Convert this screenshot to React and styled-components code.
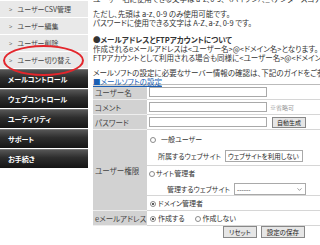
import React from "react";
import styled, { createGlobalStyle } from "styled-components";
import { ChevronDown } from "lucide-react";

const GlobalStyle = createGlobalStyle`
  html, body {
    margin: 0;
    padding: 0;
    background: #fff;
    overflow: hidden;
  }
  body {
    font-family: "Noto Sans CJK JP", "Noto Sans", sans-serif;
    font-feature-settings: "palt" 1;
    color: #333;
  }
`;

const subMenu = ["ユーザーCSV管理", "ユーザー編集", "ユーザー削除", "ユーザー切り替え"];
const mainMenu = ["メールコントロール", "ウェブコントロール", "ユーティリティ", "サポート", "お手続き"];

const App = () => {
  return (
    <>
      <GlobalStyle />
      <Page>
        <Sidebar>
          <SubList>
            {subMenu.map((label) => (
              <SubItem key={label}>
                <Chevron>&gt;</Chevron>
                {label}
              </SubItem>
            ))}
          </SubList>
          <MainList>
            {mainMenu.map((label) => (
              <MainItem key={label}>{label}</MainItem>
            ))}
          </MainList>
          <Highlight />
        </Sidebar>
        <Content>
          <Paragraph $gap={-6}>
            ユーザー名に使用できる文字は a-z、0-9、-（ハイフン）、_（アンダースコア）です。
          </Paragraph>
          <Paragraph $gap={6}>
            ただし、先頭は a-z、0-9 のみ使用可能です。
            <br />
            パスワードに使用できる文字は A-Z、a-z、0-9 です。
          </Paragraph>
          <Paragraph $gap={8}>
            <strong>●メールアドレスとFTPアカウントについて</strong>
            <br />
            作成されるeメールアドレスは&lt;ユーザー名&gt;@&lt;ドメイン名&gt;となります。
            <br />
            FTPアカウントとして利用される場合も同様に&lt;ユーザー名&gt;@&lt;ドメイン名&gt;の形式で入力してください。
          </Paragraph>
          <Paragraph $gap={6}>
            メールソフトの設定に必要なサーバー情報の確認は、下記のガイドをご参照ください。
            <br />
            <Link href="#">■メールソフトの設定</Link>
          </Paragraph>
          <FormTable>
            <tbody>
              <Row>
                <Label>ユーザー名</Label>
                <Value>
                  <TextBox />
                </Value>
              </Row>
              <Row>
                <Label>コメント</Label>
                <Value>
                  <TextBox />
                  <Note>※省略可</Note>
                </Value>
              </Row>
              <Row>
                <Label>パスワード</Label>
                <Value>
                  <TextBox />
                  <SmallButton>自動生成</SmallButton>
                </Value>
              </Row>
              <Row>
                <Label>ユーザー権限</Label>
                <Value $flush>
                  <Section $height={36}>
                    <Choice $top={5} $left={3}>
                      <Radio />
                      <ChoiceText $space={5}>一般ユーザー</ChoiceText>
                    </Choice>
                    <SelectLine $left={11} $top={6}>
                      所属するウェブサイト
                      <SelectBox $width={78}>
                        ウェブサイトを利用しない
                        <ChevronDown size={7} strokeWidth={1.5} />
                      </SelectBox>
                    </SelectLine>
                  </Section>
                  <Section $height={30}>
                    <Choice $top={3} $left={2}>
                      <Radio />
                      <ChoiceText $space={1}>サイト管理者</ChoiceText>
                    </Choice>
                    <SelectLine $left={20} $top={5}>
                      管理するウェブサイト
                      <SelectBox $width={72}>
                        ------
                        <ChevronDown size={7} strokeWidth={1.5} />
                      </SelectBox>
                    </SelectLine>
                  </Section>
                  <Section $height={14} $last>
                    <Choice $top={3} $left={3}>
                      <Radio $checked />
                      <ChoiceText $space={2}>ドメイン管理者</ChoiceText>
                    </Choice>
                  </Section>
                </Value>
              </Row>
              <Row>
                <Label>eメールアドレス</Label>
                <Value>
                  <Choice $left={1}>
                    <Radio $checked />
                    <ChoiceText $space={2}>作成する</ChoiceText>
                  </Choice>
                  <Choice $left={10}>
                    <Radio />
                    <ChoiceText $space={2}>作成しない</ChoiceText>
                  </Choice>
                </Value>
              </Row>
            </tbody>
          </FormTable>
          <Actions>
            <ActionButton>リセット</ActionButton>
            <ActionButton>設定の保存</ActionButton>
          </Actions>
        </Content>
      </Page>
    </>
  );
};

const Page = styled.div`
  display: flex;
  align-items: flex-start;
  gap: 5px;
  width: 450px;
`;

const Sidebar = styled.nav`
  position: relative;
  width: 88px;
  flex-shrink: 0;
`;

const SubList = styled.ul`
  list-style: none;
  margin: 0;
  padding: 0;
  border-top: 1px solid #fff;
  background: #e9e9e9;
`;

const SubItem = styled.li`
  display: flex;
  align-items: center;
  height: 16px;
  border-bottom: 1px solid #fff;
  padding-left: 9px;
  font-size: 7px;
  color: #444;
  white-space: nowrap;
`;

const Chevron = styled.span`
  font-size: 6px;
  color: #666;
  margin-right: 5px;
`;

const MainList = styled.ul`
  list-style: none;
  margin: 0;
  padding: 0;
  display: flex;
  flex-direction: column;
  gap: 1px;
`;

const MainItem = styled.li`
  display: flex;
  align-items: center;
  height: 19px;
  padding-left: 8px;
  background: linear-gradient(#5a5a5a 0%, #2e2e2e 45%, #151515 100%);
  box-shadow: inset 0 1px 0 #777;
  color: #fff;
  font-size: 7px;
  font-weight: bold;
  white-space: nowrap;
`;

const Highlight = styled.div`
  position: absolute;
  left: 3px;
  top: 45px;
  width: 77px;
  height: 27px;
  border: 2px solid #e3262c;
  border-radius: 50%;
  pointer-events: none;
`;

const Content = styled.main`
  width: 345px;
  flex-shrink: 0;
  font-size: 7.5px;
  line-height: 9px;
  color: #333;
`;

const Paragraph = styled.p`
  margin: ${({ $gap }) => `${$gap}px 0 0`};
  white-space: nowrap;
  & strong {
    font-weight: bold;
  }
`;

const Link = styled.a`
  color: #1a5fb4;
  text-decoration: underline;
`;

const FormTable = styled.table`
  width: 342px;
  margin-top: -2px;
  border-collapse: collapse;
  border-top: 1px solid #bbb;
`;

const Row = styled.tr`
  border-bottom: 1px solid #d6d6d6;
`;

const Label = styled.th`
  width: 52px;
  padding: 0 0 0 2px;
  background: #d2d2d2;
  border-bottom: 1px solid #eee;
  text-align: left;
  font-weight: normal;
  font-size: 7.5px;
  color: #444;
  white-space: nowrap;
  height: 14px;
`;

const Value = styled.td`
  padding: ${({ $flush }) => ($flush ? "0" : "0 2px")};
  height: 14px;
  white-space: nowrap;
  vertical-align: ${({ $flush }) => ($flush ? "top" : "middle")};
  & > * {
    vertical-align: middle;
  }
`;

const TextBox = styled.span`
  display: inline-block;
  box-sizing: border-box;
  width: 118px;
  height: 10px;
  border: 1px solid #a9a9a9;
  background: #fff;
`;

const Note = styled.span`
  margin-left: 3px;
  font-size: 6px;
  color: #999;
`;

const SmallButton = styled.span`
  display: inline-flex;
  align-items: center;
  box-sizing: border-box;
  height: 11px;
  margin-left: 5px;
  padding: 0 4px;
  border: 1px solid #888;
  background: #e6e6e6;
  font-size: 6px;
  color: #222;
`;

const Section = styled.div`
  box-sizing: border-box;
  height: ${({ $height }) => $height}px;
  border-bottom: ${({ $last }) => ($last ? "none" : "1px solid #d6d6d6")};
  display: flex;
  flex-direction: column;
  align-items: flex-start;
`;

const Choice = styled.span`
  display: inline-flex;
  align-items: center;
  margin-top: ${({ $top = 0 }) => $top}px;
  margin-left: ${({ $left = 0 }) => $left}px;
  font-size: 7px;
  color: #333;
`;

const ChoiceText = styled.span`
  margin-left: ${({ $space }) => $space}px;
`;

const Radio = styled.span`
  position: relative;
  display: inline-block;
  box-sizing: border-box;
  width: 6px;
  height: 6px;
  border: 1px solid #8a8a8a;
  border-radius: 50%;
  background: #fff;
  &::after {
    content: "";
    display: ${({ $checked }) => ($checked ? "block" : "none")};
    position: absolute;
    left: 1px;
    top: 1px;
    width: 2px;
    height: 2px;
    border-radius: 50%;
    background: #222;
  }
`;

const SelectLine = styled.div`
  display: flex;
  align-items: center;
  gap: 4px;
  margin-top: ${({ $top }) => $top}px;
  margin-left: ${({ $left }) => $left}px;
  font-size: 7px;
  color: #333;
`;

const SelectBox = styled.span`
  display: inline-flex;
  align-items: center;
  justify-content: space-between;
  box-sizing: border-box;
  width: ${({ $width }) => $width}px;
  height: 12px;
  padding: 0 2px;
  border: 1px solid #a9a9a9;
  background: #fff;
  font-size: 6.5px;
  color: #222;
`;

const Actions = styled.div`
  width: 342px;
  display: flex;
  justify-content: center;
  gap: 4px;
  margin-top: 0;
`;

const ActionButton = styled.span`
  display: inline-flex;
  align-items: center;
  box-sizing: border-box;
  height: 12px;
  padding: 0 5px;
  border: 1px solid #888;
  background: #e6e6e6;
  font-size: 6.5px;
  color: #222;
`;

export default App;
